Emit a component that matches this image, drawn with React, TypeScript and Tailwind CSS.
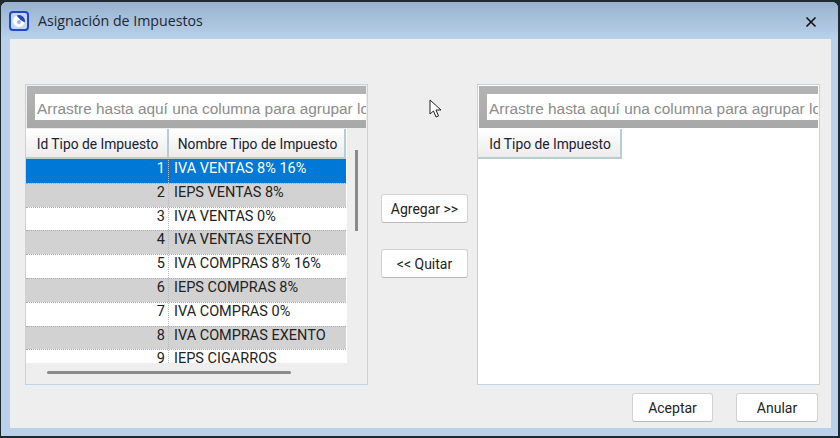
import React from "react";

const rows = [
  "IVA VENTAS 8% 16%",
  "IEPS VENTAS 8%",
  "IVA VENTAS 0%",
  "IVA VENTAS EXENTO",
  "IVA COMPRAS 8% 16%",
  "IEPS COMPRAS 8%",
  "IVA COMPRAS 0%",
  "IVA COMPRAS EXENTO",
  "IEPS CIGARROS",
];

const uiFont = "font-['Roboto','Liberation_Sans',sans-serif]";

function GroupPanel() {
  return (
    <div className="h-[42px] mb-px shrink-0 bg-gradient-to-b from-[#b4b4b4] to-[#a8a8a8] pl-[8px] pt-[8px] overflow-hidden">
      <div className="h-[26px] bg-white pl-[2px] pt-[3px] flex items-center overflow-hidden whitespace-nowrap font-['Liberation_Sans',sans-serif] text-[15.4px] text-[#8c8c8c]">
        Arrastre hasta aquí una columna para agrupar los datos
      </div>
    </div>
  );
}

function HeaderCell({ text, width }: { text: string; width: string }) {
  return (
    <div
      className={`${width} h-[30px] pt-[2px] pl-[2px] shrink-0 flex items-center justify-center bg-gradient-to-b from-white to-[#ececec] border-r-2 border-b-2 border-[#b7cdd0] text-[13.8px] text-[#202030]`}
    >
      {text}
    </div>
  );
}

function ActionButton({ text, width }: { text: string; width: string }) {
  return (
    <button
      className={`${width} h-[29px] pt-px rounded-[3px] bg-white border border-[#d2d2d2] border-b-[#b9b9b9] text-[14px] text-[#222] flex items-center justify-center`}
    >
      {text}
    </button>
  );
}

export default function App() {
  return (
    <div className={`w-[840px] h-[438px] overflow-hidden bg-[#1d2a30] pt-[2px] pl-[1px] pr-[2px] pb-[2px] ${uiFont}`}>
      <div className="h-[434px] rounded-t-[6px] overflow-hidden bg-[#bad1e9] flex flex-col">
        <div className="h-[37px] shrink-0 flex items-center pl-[8px] pr-[21px] bg-gradient-to-b from-[#98b2ce] to-[#b9d1ea]">
          <svg width="20" height="20" viewBox="0 0 20 20" className="shrink-0">
            <rect x="1" y="1" width="18" height="18" rx="3" fill="#c9d6f6" stroke="#1f49c4" strokeWidth="2" />
            <circle cx="10" cy="10" r="6" fill="#ffffff" />
            <path d="M7.5 4.6 A6 6 0 0 1 15.8 11.5 L11.5 9 Z" fill="#2547b8" />
            <circle cx="10" cy="11" r="2" fill="#9db4ea" />
          </svg>
          <span className="ml-[9px] mt-px font-['Open_Sans',sans-serif] text-[14.2px] text-[#1c2733]">Asignación de Impuestos</span>
          <svg width="12" height="12" viewBox="0 0 12 12" className="ml-auto mt-[3px]">
            <path d="M1.5 1.5 L10.5 10.5 M10.5 1.5 L1.5 10.5" stroke="#111" strokeWidth="1.6" />
          </svg>
        </div>

        <div className="ml-[9px] mr-[7px] h-[389px] bg-[#eeeeee] flex flex-col pt-[45px] pl-[15px] pr-[10px]">
          <div className="flex h-[301px] shrink-0">
            {/* left grid */}
            <div className="relative w-[343px] h-full border border-[#c3d3e2] p-px flex flex-col overflow-hidden">
              <GroupPanel />
              <div className="-ml-px w-[321px] h-[234px] overflow-hidden bg-white">
                <div className="flex w-[320px]">
                  <HeaderCell text="Id Tipo de Impuesto" width="w-[143px]" />
                  <HeaderCell text="Nombre Tipo de Impuesto" width="w-[177px]" />
                </div>
                {rows.map((name, i) => (
                  <div
                    key={name}
                    className={`flex w-[320px] h-[23.8px] text-[14.5px] leading-[17px] border-t border-dotted ${
                      i === 0
                        ? "bg-[#0078d7] text-white border-[#0078d7]"
                        : i % 2 === 1
                          ? "bg-[#d2d2d2] text-[#222] border-[#aaaaaa]"
                          : "bg-white text-[#222] border-[#aaaaaa]"
                    }`}
                  >
                    <div className="w-[143px] h-full pr-[3px] text-right border-r border-dotted border-[#bbbbbb]">{i + 1}</div>
                    <div className="pl-[5px]">{name}</div>
                  </div>
                ))}
              </div>
              {/* scrollbars float over the grid */}
              <div className="absolute left-[329px] top-[65px] w-[3px] h-[81px] bg-[#8a8a8a]" />
              <div className="absolute left-[21px] top-[286px] w-[244px] h-[3px] bg-[#8a8a8a] rounded-full" />
            </div>

            {/* middle buttons */}
            <div className="w-[109px] shrink-0 flex flex-col items-center gap-[26px] pt-[110px] pl-[4px]">
              <ActionButton text="Agregar >>" width="w-[87px]" />
              <ActionButton text="<< Quitar" width="w-[87px]" />
            </div>

            {/* right grid */}
            <div className="w-[343px] h-full border border-[#c3d3e2] p-px bg-white flex flex-col overflow-hidden">
              <GroupPanel />
              <div className="-ml-px">
                <HeaderCell text="Id Tipo de Impuesto" width="w-[144px]" />
              </div>
            </div>
          </div>

          <div className="flex justify-end gap-[23px] pt-[8px] pr-[3px]">
            <ActionButton text="Aceptar" width="w-[81px]" />
            <ActionButton text="Anular" width="w-[82px]" />
          </div>
        </div>
      </div>

      {/* mouse pointer */}
      <svg width="14" height="20" viewBox="0 0 14 20" className="absolute left-[429px] top-[99px]">
        <path d="M1 1 L1 15 L4.5 12 L7 18 L9.5 17 L7 11 L12 11 Z" fill="#ffffff" stroke="#222" strokeWidth="1" />
      </svg>
    </div>
  );
}
